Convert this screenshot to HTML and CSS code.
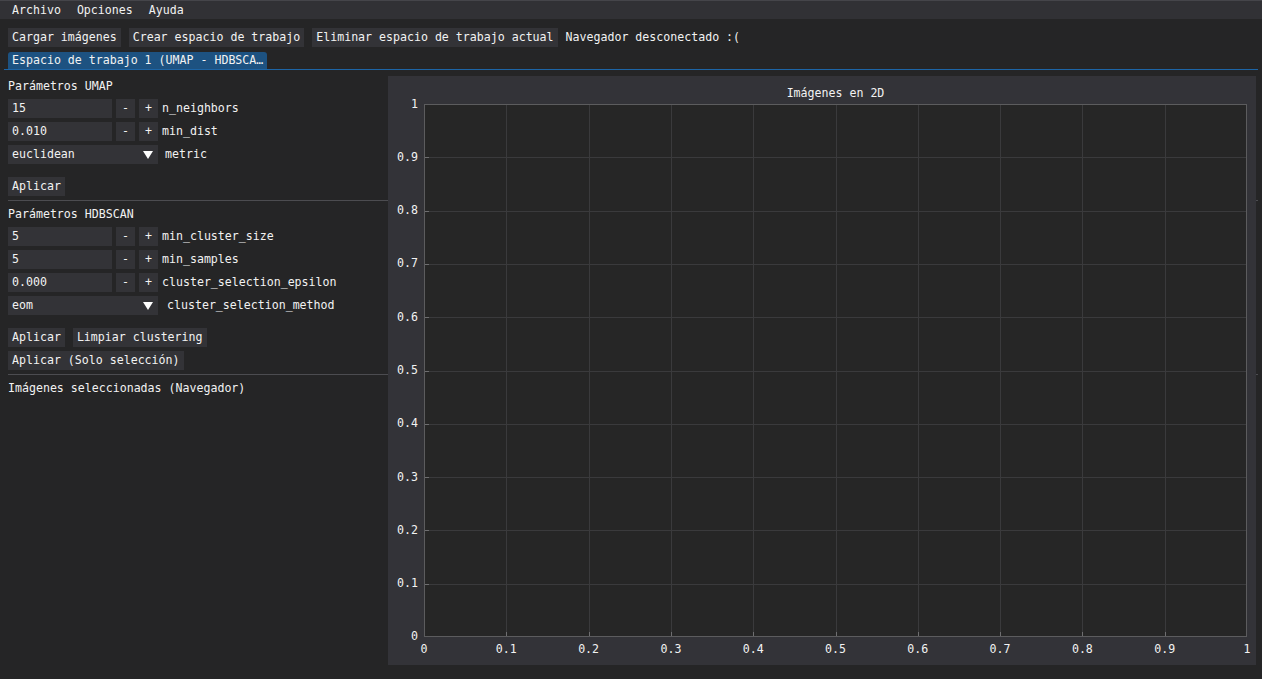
FILE: index.html
```html
<!DOCTYPE html>
<html lang="es">
<head>
<meta charset="utf-8">
<title>Espacio de trabajo</title>
<link rel="stylesheet" href="styles.css">
</head>
<body>
<div class="menubar">
  <span class="menu-item">Archivo</span>
  <span class="menu-item">Opciones</span>
  <span class="menu-item">Ayuda</span>
</div>
<div class="toolbar">
  <div class="btn">Cargar imágenes</div>
  <div class="btn">Crear espacio de trabajo</div>
  <div class="btn">Eliminar espacio de trabajo actual</div>
  <span class="status">Navegador desconectado :(</span>
</div>
<div class="tabbar">
  <div class="tab">Espacio de trabajo 1 (UMAP - HDBSCA…</div>
</div>
<div class="content">
  <div class="panel">
    <div class="heading first">Parámetros UMAP</div>
    <div class="row"><div class="input">15</div><div class="step">-</div><div class="step">+</div><span class="label">n_neighbors</span></div>
    <div class="row"><div class="input">0.010</div><div class="step">-</div><div class="step">+</div><span class="label">min_dist</span></div>
    <div class="row"><div class="combo"><span>euclidean</span><svg class="arrow" width="10" height="8" viewBox="0 0 10 8"><polygon points="0,0 10,0 5,8" fill="#ffffff"/></svg></div><span class="label combo-label">metric</span></div>
    <div class="btn-row spaced"><div class="btn">Aplicar</div></div>
    <div class="separator"></div>
    <div class="heading">Parámetros HDBSCAN</div>
    <div class="row"><div class="input">5</div><div class="step">-</div><div class="step">+</div><span class="label">min_cluster_size</span></div>
    <div class="row"><div class="input">5</div><div class="step">-</div><div class="step">+</div><span class="label">min_samples</span></div>
    <div class="row"><div class="input">0.000</div><div class="step">-</div><div class="step">+</div><span class="label">cluster_selection_epsilon</span></div>
    <div class="row"><div class="combo"><span>eom</span><svg class="arrow" width="10" height="8" viewBox="0 0 10 8"><polygon points="0,0 10,0 5,8" fill="#ffffff"/></svg></div><span class="label combo-label wide">cluster_selection_method</span></div>
    <div class="btn-row spaced"><div class="btn">Aplicar</div><div class="btn">Limpiar clustering</div></div>
    <div class="btn-row"><div class="btn">Aplicar (Solo selección)</div></div>
    <div class="separator"></div>
    <div class="heading">Imágenes seleccionadas (Navegador)</div>
  </div>

  <div class="plotwin">
    <div class="plotgrid">
      <div class="plot-title">Imágenes en 2D</div>
      <div class="ylabels">
        <span>1</span><span>0.9</span><span>0.8</span><span>0.7</span><span>0.6</span><span>0.5</span><span>0.4</span><span>0.3</span><span>0.2</span><span>0.1</span><span>0</span>
      </div>
      <div class="plot-area">
        <svg width="823" height="533" viewBox="0 0 823 533" shape-rendering="crispEdges">
          <rect x="0" y="0" width="823" height="533" fill="#262626"/>
          <path d="M82.5 0V533M165.5 0V533M247.5 0V533M329.5 0V533M412.5 0V533M494.5 0V533M576.5 0V533M658.5 0V533M741.5 0V533M0 53.5H823M0 107.5H823M0 160.5H823M0 213.5H823M0 267.5H823M0 320.5H823M0 373.5H823M0 426.5H823M0 480.5H823" stroke="#3a3a3c" stroke-width="1" fill="none"/>
          <path d="M1 53.5H5M1 107.5H5M1 160.5H5M1 213.5H5M1 267.5H5M1 320.5H5M1 373.5H5M1 426.5H5M1 480.5H5M82.5 528V532M165.5 528V532M247.5 528V532M329.5 528V532M412.5 528V532M494.5 528V532M576.5 528V532M658.5 528V532M741.5 528V532" stroke="#6e6e70" stroke-width="1" fill="none"/>
          <rect x="0.5" y="0.5" width="822" height="532" fill="none" stroke="#5c5c5e" stroke-width="1"/>
        </svg>
      </div>
      <div class="xlabels">
        <span>0</span><span>0.1</span><span>0.2</span><span>0.3</span><span>0.4</span><span>0.5</span><span>0.6</span><span>0.7</span><span>0.8</span><span>0.9</span><span>1</span>
      </div>
    </div>
  </div>
</div>
</body>
</html>
```

FILE: styles.css
```css
* {
  box-sizing: border-box;
}

html, body {
  margin: 0;
  padding: 0;
}

body {
  width: 1262px;
  height: 679px;
  overflow: hidden;
  background: #252526;
  color: #f2f2f2;
  font-family: "DejaVu Sans Mono", "Liberation Mono", monospace;
  font-size: 11.6px;
  line-height: 13px;
  white-space: nowrap;
}

/* Menu bar */
.menubar {
  height: 19px;
  background: #313135;
  border-top: 1px solid #45454a;
  display: flex;
  align-items: center;
  padding-left: 12px;
  gap: 16px;
}

.menu-item {
  line-height: 13px;
}

/* Toolbar */
.toolbar {
  display: flex;
  align-items: center;
  gap: 8px;
  padding: 8px 8px 0 8px;
  margin-top: 1px;
}

.btn {
  height: 19px;
  line-height: 19px;
  padding: 0 4px;
  background: #333337;
}

.status {
  line-height: 19px;
}

/* Tabs */
.tabbar {
  margin: 5px 4px 0 4px;
  padding-left: 4px;
  border-bottom: 1px solid #1d65a6;
  display: flex;
}

.tab {
  height: 17px;
  line-height: 17px;
  padding: 0 4px;
  background: #1d5281;
  border-radius: 3px 3px 0 0;
}

/* Content */
.content {
  display: grid;
  grid-template-columns: 1fr;
  grid-template-rows: auto;
}

.panel,
.plotwin {
  grid-area: 1 / 1;
}

.panel {
  display: flex;
  flex-direction: column;
  align-items: flex-start;
  padding: 10px 4px 0 8px;
}

.heading {
  line-height: 13px;
  height: 13px;
  margin: 7px 0 6px 0;
}

.heading.first {
  margin-top: 0;
}

.row {
  display: flex;
  align-items: center;
  height: 19px;
  margin-bottom: 4px;
}

.input {
  width: 104px;
  height: 19px;
  line-height: 19px;
  padding-left: 4px;
  background: #333337;
}

.step {
  width: 19px;
  height: 19px;
  line-height: 19px;
  text-align: center;
  background: #333337;
  margin-left: 4px;
}

.label {
  margin-left: 4px;
}

.combo {
  width: 150px;
  height: 19px;
  display: flex;
  align-items: center;
  justify-content: space-between;
  padding: 0 5px 0 4px;
  background: #333337;
}

.arrow {
  display: block;
}

.label.combo-label {
  margin-left: 7px;
}

.label.combo-label.wide {
  margin-left: 9px;
}

.btn-row {
  display: flex;
  gap: 8px;
  margin-bottom: 4px;
}

.btn-row.spaced {
  margin-top: 9px;
}

.separator {
  align-self: stretch;
  height: 1px;
  background: #4c4c50;
}

/* Plot window */
.plotwin {
  justify-self: start;
  align-self: start;
  margin-top: 6px;
  margin-left: 388px;
  width: 868px;
  height: 589px;
  background: #333338;
  padding-top: 11px;
}

.plotgrid {
  display: grid;
  grid-template-columns: 30px 823px;
  column-gap: 6px;
  grid-template-rows: 13px 533px 13px;
}

.plot-title {
  grid-column: 2;
  grid-row: 1;
  text-align: center;
}

.ylabels {
  grid-column: 1;
  grid-row: 2;
  display: flex;
  flex-direction: column;
  justify-content: space-between;
  align-items: stretch;
  margin-top: 4px;
  height: 533px;
}

.ylabels span {
  height: 0;
  display: flex;
  align-items: center;
  justify-content: flex-end;
}

.plot-area {
  grid-column: 2;
  grid-row: 2;
  margin-top: 4px;
  height: 533px;
}

.plot-area svg {
  display: block;
}

.xlabels {
  grid-column: 2;
  grid-row: 3;
  margin-top: 10px;
  display: flex;
  justify-content: space-between;
}

.xlabels span {
  width: 0;
  display: flex;
  justify-content: center;
}
```
